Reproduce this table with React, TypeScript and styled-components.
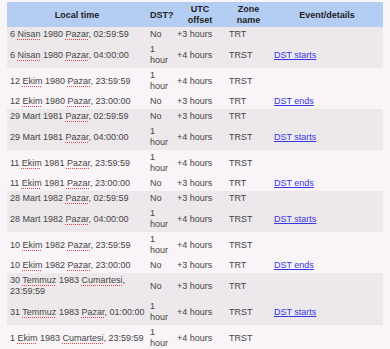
import styled, { createGlobalStyle } from "styled-components";

/* ── Data ── */

interface Transition {
	local: string;
	dst: string;
	offset: string;
	zone: string;
	event?: string;
}

const groups: Transition[][] = [
	[
		{ local: "6 Nisan 1980 Pazar, 02:59:59", dst: "No", offset: "+3 hours", zone: "TRT" },
		{ local: "6 Nisan 1980 Pazar, 04:00:00", dst: "1 hour", offset: "+4 hours", zone: "TRST", event: "DST starts" },
	],
	[
		{ local: "12 Ekim 1980 Pazar, 23:59:59", dst: "1 hour", offset: "+4 hours", zone: "TRST" },
		{ local: "12 Ekim 1980 Pazar, 23:00:00", dst: "No", offset: "+3 hours", zone: "TRT", event: "DST ends" },
	],
	[
		{ local: "29 Mart 1981 Pazar, 02:59:59", dst: "No", offset: "+3 hours", zone: "TRT" },
		{ local: "29 Mart 1981 Pazar, 04:00:00", dst: "1 hour", offset: "+4 hours", zone: "TRST", event: "DST starts" },
	],
	[
		{ local: "11 Ekim 1981 Pazar, 23:59:59", dst: "1 hour", offset: "+4 hours", zone: "TRST" },
		{ local: "11 Ekim 1981 Pazar, 23:00:00", dst: "No", offset: "+3 hours", zone: "TRT", event: "DST ends" },
	],
	[
		{ local: "28 Mart 1982 Pazar, 02:59:59", dst: "No", offset: "+3 hours", zone: "TRT" },
		{ local: "28 Mart 1982 Pazar, 04:00:00", dst: "1 hour", offset: "+4 hours", zone: "TRST", event: "DST starts" },
	],
	[
		{ local: "10 Ekim 1982 Pazar, 23:59:59", dst: "1 hour", offset: "+4 hours", zone: "TRST" },
		{ local: "10 Ekim 1982 Pazar, 23:00:00", dst: "No", offset: "+3 hours", zone: "TRT", event: "DST ends" },
	],
	[
		{ local: "30 Temmuz 1983 Cumartesi, 23:59:59", dst: "No", offset: "+3 hours", zone: "TRT" },
		{ local: "31 Temmuz 1983 Pazar, 01:00:00", dst: "1 hour", offset: "+4 hours", zone: "TRST", event: "DST starts" },
	],
	[
		{ local: "1 Ekim 1983 Cumartesi, 23:59:59", dst: "1 hour", offset: "+4 hours", zone: "TRST" },
	],
];

// words the browser's spell checker flags in the original page
const flagged = new Set(["Nisan", "Ekim", "Pazar", "Temmuz", "Cumartesi"]);

/* ── Styles ── */

const GlobalStyle = createGlobalStyle`
  html, body {
    margin: 0;
    padding: 0;
    background: #f8f4f7;
  }
`;

const Page = styled.div`
  padding: 2px 7px 0;
`;

const Table = styled.table`
  width: 376px;
  table-layout: fixed;
  border-collapse: collapse;
  font-family: "Liberation Sans", Arial, sans-serif;
  font-size: 9px;
  line-height: 11px;
  color: #454545;
`;

const Head = styled.th`
  background: #b4cdf2;
  color: #1f1f1f;
  font-weight: bold;
  text-align: center;
  vertical-align: middle;
  padding: 2px 3px 1px;
`;

const Group = styled.tbody<{ $shaded: boolean }>`
  background: ${({ $shaded }) => ($shaded ? "#ece8eb" : "transparent")};
`;

const Cell = styled.td<{ $first?: boolean }>`
  padding: ${({ $first }) => ($first ? "2px 0 2px 3px" : "2px 3px")};
  text-align: left;
  vertical-align: middle;
`;

const Misspelt = styled.span`
  text-decoration: underline dotted #e04848;
  text-decoration-thickness: 1px;
  text-underline-offset: 2px;
  text-decoration-skip-ink: none;
`;

const EventLink = styled.a`
  color: #3838e2;
  text-decoration: underline;
`;

function LocalTime({ text }: { text: string }) {
	const words = text.split(" ");
	return (
		<>
			{words.map((w, i) => {
				const bare = w.replace(/,$/, "");
				const sep = i < words.length - 1 ? " " : "";
				if (!flagged.has(bare)) return <span key={i}>{w + sep}</span>;
				return (
					<span key={i}>
						<Misspelt>{bare}</Misspelt>
						{w.slice(bare.length) + sep}
					</span>
				);
			})}
		</>
	);
}

export default function App() {
	return (
		<>
			<GlobalStyle />
			<Page>
				<Table>
					<colgroup>
						<col style={{ width: 140 }} />
						<col style={{ width: 27 }} />
						<col style={{ width: 52 }} />
						<col style={{ width: 45 }} />
						<col style={{ width: 112 }} />
					</colgroup>
					<thead>
						<tr>
							<Head>Local time</Head>
							<Head>DST?</Head>
							<Head>UTC<br />offset</Head>
							<Head>Zone<br />name</Head>
							<Head>Event/details</Head>
						</tr>
					</thead>
					{groups.map((rows, g) => (
						<Group key={g} $shaded={g % 2 === 0}>
							{rows.map((r) => (
								<tr key={r.local}>
									<Cell $first><LocalTime text={r.local} /></Cell>
									<Cell>{r.dst}</Cell>
									<Cell>{r.offset}</Cell>
									<Cell>{r.zone}</Cell>
									<Cell>{r.event && <EventLink href="#">{r.event}</EventLink>}</Cell>
								</tr>
							))}
						</Group>
					))}
				</Table>
			</Page>
		</>
	);
}
